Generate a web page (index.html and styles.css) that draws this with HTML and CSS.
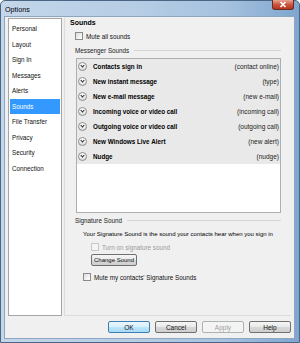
FILE: index.html
```html
<!DOCTYPE html>
<html lang="en">
<head>
    <meta charset="UTF-8">
    <meta name="viewport" content="width=device-width, initial-scale=1.0">
    <title>Options</title>
    <link rel="stylesheet" href="styles.css">
</head>
<body>
    <div class="window">
        <div class="titlebar">
            <span class="title">Options</span>
            <span class="close">
                <svg width="20" height="9" viewBox="0 0 20 9">
                    <path d="M7.5 2 L12.5 7 M12.5 2 L7.5 7" stroke="#fff" stroke-width="1.6"/>
                </svg>
            </span>
        </div>
        <div class="client">
            <div class="main">
                <ul class="nav">
                    <li>Personal</li>
                    <li>Layout</li>
                    <li>Sign In</li>
                    <li>Messages</li>
                    <li>Alerts</li>
                    <li class="selected">Sounds</li>
                    <li>File Transfer</li>
                    <li>Privacy</li>
                    <li>Security</li>
                    <li>Connection</li>
                </ul>
                <div class="panel">
                    <h1 class="heading">Sounds</h1>
                    <div class="inner">
                        <label class="check"><span class="box"></span>Mute all sounds</label>
                        <div class="group">Messenger Sounds</div>
                        <div class="sounds">
                            <div class="row"><span class="arrow"></span><b>Contacts sign in</b><span class="event">(contact online)</span></div>
                            <div class="row"><span class="arrow"></span><b>New instant message</b><span class="event">(type)</span></div>
                            <div class="row"><span class="arrow"></span><b>New e-mail message</b><span class="event">(new e-mail)</span></div>
                            <div class="row"><span class="arrow"></span><b>Incoming voice or video call</b><span class="event">(incoming call)</span></div>
                            <div class="row"><span class="arrow"></span><b>Outgoing voice or video call</b><span class="event">(outgoing call)</span></div>
                            <div class="row"><span class="arrow"></span><b>New Windows Live Alert</b><span class="event">(new alert)</span></div>
                            <div class="row"><span class="arrow"></span><b>Nudge</b><span class="event">(nudge)</span></div>
                        </div>
                        <div class="group">Signature Sound</div>
                        <p class="note">Your Signature Sound is the sound your contacts hear when you sign in</p>
                        <label class="check sub disabled"><span class="box"></span>Turn on signature sound</label>
                        <button class="btn change">Change Sound</button>
                        <label class="check note-check"><span class="box"></span>Mute my contacts' Signature Sounds</label>
                    </div>
                </div>
            </div>
            <div class="buttons">
                <button class="btn focused">OK</button>
                <button class="btn">Cancel</button>
                <button class="btn" disabled>Apply</button>
                <button class="btn">Help</button>
            </div>
        </div>
    </div>
</body>
</html>
```

FILE: styles.css
```css
body {
    margin: 0;
    width: 300px;
    height: 343px;
    overflow: hidden;
    font-family: "Liberation Sans", Arial, sans-serif;
    color: #000;
}

.window {
    width: 300px;
    height: 343px;
    box-sizing: border-box;
    display: flex;
    flex-direction: column;
    border: 1px solid #4a6684;
    border-radius: 5px 5px 0 0;
    background: linear-gradient(90deg, #c3d6ea 0%, #b6cde5 45%, #a6c2df 75%, #7fa6cf 100%);
}

.titlebar {
    height: 15px;
    display: flex;
    align-items: center;
    justify-content: space-between;
}

.title {
    font-size: 7.2px;
    margin-left: 4px;
    margin-top: 1px;
    color: #000;
}

.close {
    width: 20px;
    height: 9px;
    align-self: flex-start;
    margin-right: 5px;
    margin-top: -1px;
    background: linear-gradient(#e8a493, #c9573f 50%, #b8321c);
    border: 1px solid #6d2a1f;
    border-top: none;
    border-radius: 0 0 3px 3px;
}

.close svg {
    display: block;
}

.client {
    flex: 1;
    margin: 0 4px 3px 3px;
    background: #f0f0f0;
    border: 1px solid #8ea6c0;
    display: flex;
    flex-direction: column;
}

.main {
    height: 299px;
    display: flex;
    align-items: flex-start;
}

.nav {
    list-style: none;
    margin: 1px 0 0 3px;
    padding: 2px 1px 0;
    width: 50px;
    height: 294px;
    background: #fff;
    border: 1px solid #a5a5a5;
    font-size: 6.3px;
}

.nav li {
    height: 15.5px;
    line-height: 15.5px;
    padding-left: 2px;
    color: #111;
}

.nav .selected {
    background: #3399ff;
    color: #fff;
}

.panel {
    flex: 1;
    margin: 1px 3px 0 2px;
    height: 297px;
    border-left: 1px solid #dcdcdc;
    border-bottom: 1px solid #dcdcdc;
}

.heading {
    margin: 0 0 0 5px;
    font-size: 7px;
    line-height: 9px;
    font-weight: bold;
}

.inner {
    padding: 0 10px;
    font-size: 6.3px;
}

.check {
    display: flex;
    align-items: center;
    height: 8px;
    margin-top: 5px;
    color: #111;
}

.box {
    width: 6px;
    height: 6px;
    border: 1px solid #8a8a8a;
    background: linear-gradient(135deg, #dcdcdc, #fff);
    margin-right: 3px;
}

.check.disabled {
    color: #9a9a9a;
}

.check.disabled .box {
    border-color: #c8c8c8;
    background: #f4f4f4;
}

.check.sub {
    margin-left: 16px;
    margin-top: 4px;
}

.note-check {
    margin-left: 8px;
    margin-top: 7px;
}

.group {
    display: flex;
    align-items: center;
    height: 9px;
    margin-top: 6px;
    color: #222;
}

.group::after {
    content: "";
    flex: 1;
    height: 1px;
    margin-left: 5px;
    background: #d5d5d5;
}

.sounds {
    margin: 3px 0 0 1px;
    height: 153px;
    background: #fff;
    border: 1px solid #aeaeae;
}

.row {
    height: 15px;
    display: flex;
    align-items: center;
    background: #e9e9e9;
    font-size: 6.3px;
}

.arrow {
    width: 9px;
    height: 9px;
    margin: 0 6px 0 1px;
    box-sizing: border-box;
    border: 1px solid #8c8c8c;
    border-radius: 50%;
    background: linear-gradient(#fff, #dedede);
    position: relative;
}

.arrow::after {
    content: "";
    position: absolute;
    left: 2px;
    top: 1px;
    width: 2px;
    height: 2px;
    border-right: 1.2px solid #2a2a2a;
    border-bottom: 1.2px solid #2a2a2a;
    transform: rotate(45deg);
}

.event {
    margin-left: auto;
    margin-right: 1px;
    color: #222;
    font-size: 6.5px;
}

.sounds + .group {
    margin-top: 3px;
}

.note {
    margin: 5px 0 0 8px;
    line-height: 9px;
    font-size: 6px;
}

.btn {
    display: block;
    white-space: nowrap;
    font-family: "Liberation Sans", Arial, sans-serif;
    font-size: 6.5px;
    height: 12px;
    padding: 0;
    border: 1px solid #707070;
    border-radius: 2px;
    background: linear-gradient(#f6f6f6, #e8e8e8 50%, #d8d8d8 51%, #cfcfcf);
    color: #111;
}

.change {
    width: 46px;
    margin: 3px 0 0 16px;
    font-size: 6px;
}

.buttons {
    display: flex;
    justify-content: flex-end;
    gap: 5px;
    padding: 5px 3px 0 0;
}

.buttons .btn {
    width: 42px;
}

.btn.focused {
    border-color: #3c7fb1;
    background: linear-gradient(#eaf6fd, #d9f0fc 50%, #bee6fd 51%, #a7d9f5);
}

.btn:disabled {
    border-color: #adb2b5;
    background: #f4f4f4;
    color: #a0a0a0;
}
```
